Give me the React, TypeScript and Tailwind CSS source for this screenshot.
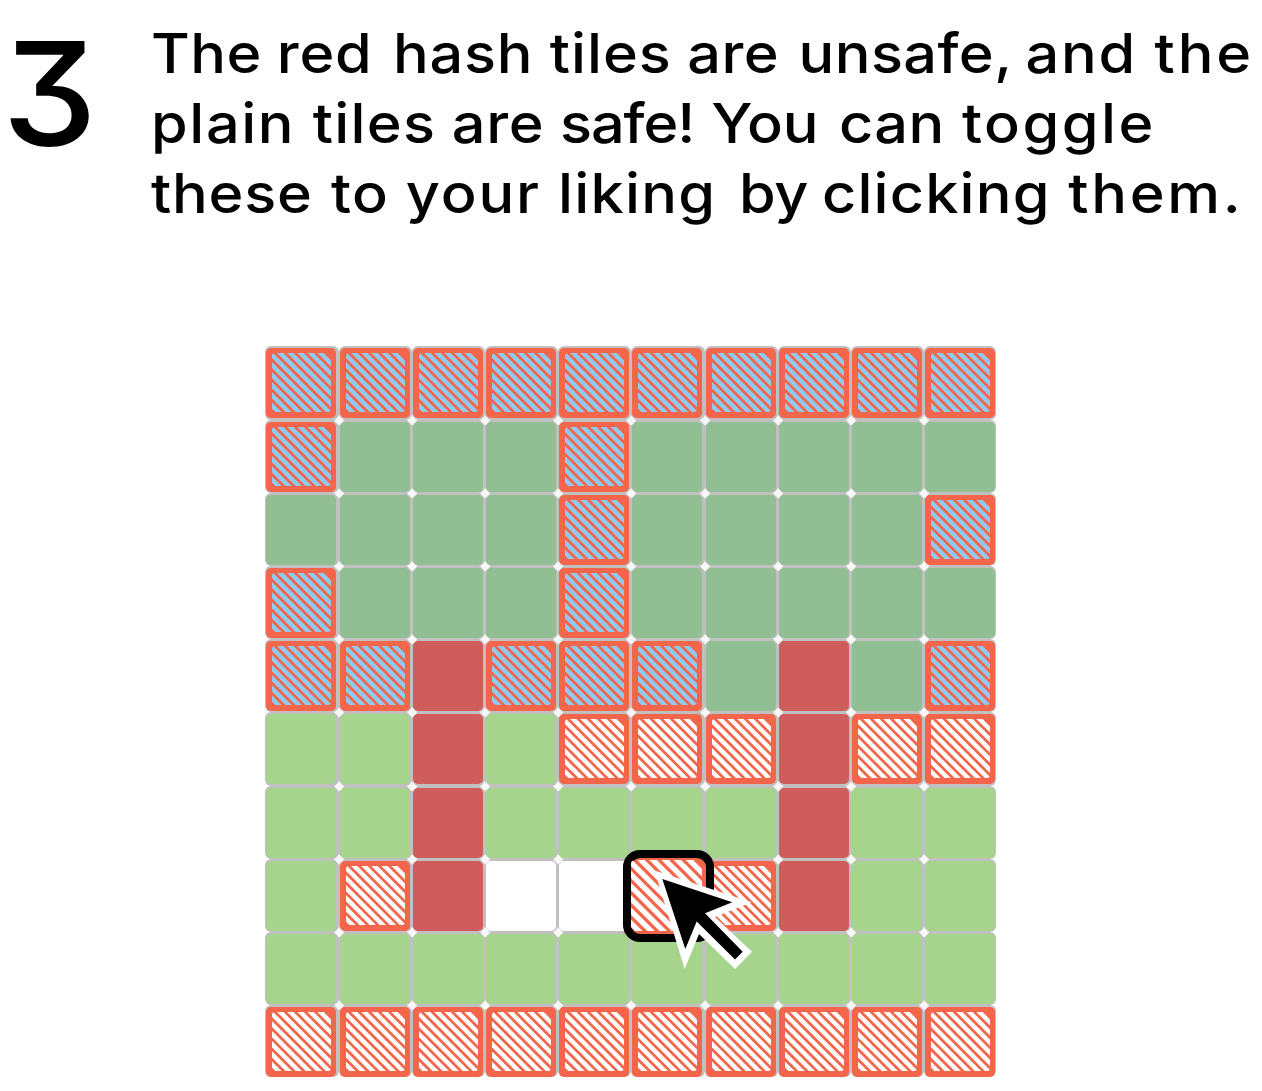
const HATCH_OFFSETS = [-52.5, -42.3, -32.2, -22.1, -12, -2, 8.2, 18.3, 28.4, 38.5, 48.5];

// b: hatched on blue, r: hatched on white, d: dark green, g: light green, x: red, w: white
const ROWS = [
  'bbbbbbbbbb',
  'bdddbddddd',
  'ddddbddddb',
  'bdddbddddd',
  'bbxbbbdxdb',
  'ggxgrrrxrr',
  'ggxggggxgg',
  'grxwwrrxgg',
  'gggggggggg',
  'rrrrrrrrrr',
];

const FILLS: Record<string, string> = {
  b: 'bg-[#f4664b]',
  r: 'bg-[#f4664b]',
  d: 'bg-[#91be92]',
  g: 'bg-[#a6d48c]',
  x: 'bg-[#cf5d5b]',
  w: 'bg-white',
};

function Hatch({ color, className }: { color: string; className: string }) {
  return (
    <svg viewBox="0 0 59 59" className={className} overflow="hidden">
      {HATCH_OFFSETS.map((d) => (
        <line key={d} x1={d - 5} y1={-5} x2={d + 65} y2={65} stroke={color} strokeWidth={4.4} />
      ))}
    </svg>
  );
}

function Tile({ kind, joint }: { kind: string; joint: boolean }) {
  const hatched = kind === 'b' || kind === 'r';
  return (
    <div className="relative rounded-[6px] bg-[#c0c0c0] p-[1.5px]">
      <div className={`size-[70px] rounded-[5px] pt-[5.5px] pl-[5.8px] ${FILLS[kind]}`}>
        {hatched && (
          <Hatch color={kind === 'b' ? '#8fcaf1' : '#ffffff'} className="size-[59px] rounded-[3px]" />
        )}
      </div>
      {joint && (
        <span className="absolute -right-[3.5px] -bottom-[3.5px] z-10 size-[6.5px] rotate-45 rounded-[1px] bg-[#f8f8f8]" />
      )}
    </div>
  );
}

const LINES: [string, string][][] = [
  [
    ['The', 'w-[116.5px] tracking-[0.4px]'],
    ['red', 'w-[107.5px] tracking-[0.7px]'],
    ['hash', 'w-[145.3px] tracking-[0.7px]'],
    ['tiles', 'w-[127.3px] tracking-[0.9px]'],
    ['are', 'w-[103px] tracking-[0.4px]'],
    ['unsafe,', 'w-[210.2px] tracking-[0.4px]'],
    ['and', 'w-[119.5px] tracking-[1.6px]'],
    ['the', 'w-[92px] tracking-[2.6px]'],
  ],
  [
    ['plain', 'w-[149.8px] tracking-[1.5px]'],
    ['tiles', 'w-[128.7px] tracking-[1.2px]'],
    ['are', 'w-[100.2px] tracking-[0.7px]'],
    ['safe!', 'w-[140px] tracking-[-1px]'],
    ['You', 'w-[118.3px] tracking-[-0.2px]'],
    ['can', 'w-[113.9px] tracking-[0.4px]'],
    ['toggle', 'w-[180px] tracking-[2.3px]'],
  ],
  [
    ['these', 'w-[166.7px] tracking-[0.7px]'],
    ['to', 'w-[69.3px] tracking-[1.2px]'],
    ['your', 'w-[140.8px] tracking-[1.7px]'],
    ['liking', 'w-[167.6px] tracking-[1.2px]'],
    ['by', 'w-[76.9px] tracking-[-0.2px]'],
    ['clicking', 'w-[228.1px] tracking-[1.1px]'],
    ['them.', 'w-[160px] tracking-[2.5px]'],
  ],
];

export default function App() {
  return (
    <main className="h-[1091px] w-[1262px] overflow-hidden bg-white text-black">
      <header className="flex h-[346px] font-['Inter',sans-serif] font-medium">
        <div className="w-[151px] shrink-0 origin-left scale-x-[1.05] pt-[19px] pl-[2px] text-[144px] leading-[150px] [font-feature-settings:'cv09']">
          3
        </div>
        <div className="origin-left scale-x-[1.08] pt-[18px] text-[55px] leading-[70px] whitespace-nowrap">
          {LINES.map((words, n) => (
            <p key={n} className="flex">
              {words.map(([word, style]) => (
                <span key={word} className={`shrink-0 ${style}`}>
                  {word}{' '}
                </span>
              ))}
            </p>
          ))}
        </div>
      </header>
      <section className="relative ml-[264.7px] grid h-[731px] w-[731px] grid-cols-[74px_73px_73px_73px_73px_74px_73px_73px_73px_72px] grid-rows-[74px_73px_73px_73px_73px_74px_73px_73px_73px_72px]">
        {ROWS.join('').split('').map((kind, i) => (
          <Tile key={i} kind={kind} joint={i % 10 < 9 && i < 90} />
        ))}
        <div className="absolute top-[504px] left-[358.3px] z-20 h-[92px] w-[91px] rounded-[17px] border-8 border-black bg-[#f4664b]">
          <Hatch color="#ffffff" className="mt-[2px] ml-[0.5px] size-[71px] rounded-[4px]" />
        </div>
        <svg viewBox="650 865 110 110" className="absolute top-[519px] left-[385.3px] z-20 size-[110px]">
          <polygon fill="#fff" points="654.5,870.5 751.7,902.3 715,917 752,951.7 735,969 699,934 684.7,969" />
          <polygon points="662.3,879 732.3,902.3 705,913.3 742.7,951.7 735,959.5 696.7,921.5 685.3,949" />
        </svg>
      </section>
    </main>
  );
}
